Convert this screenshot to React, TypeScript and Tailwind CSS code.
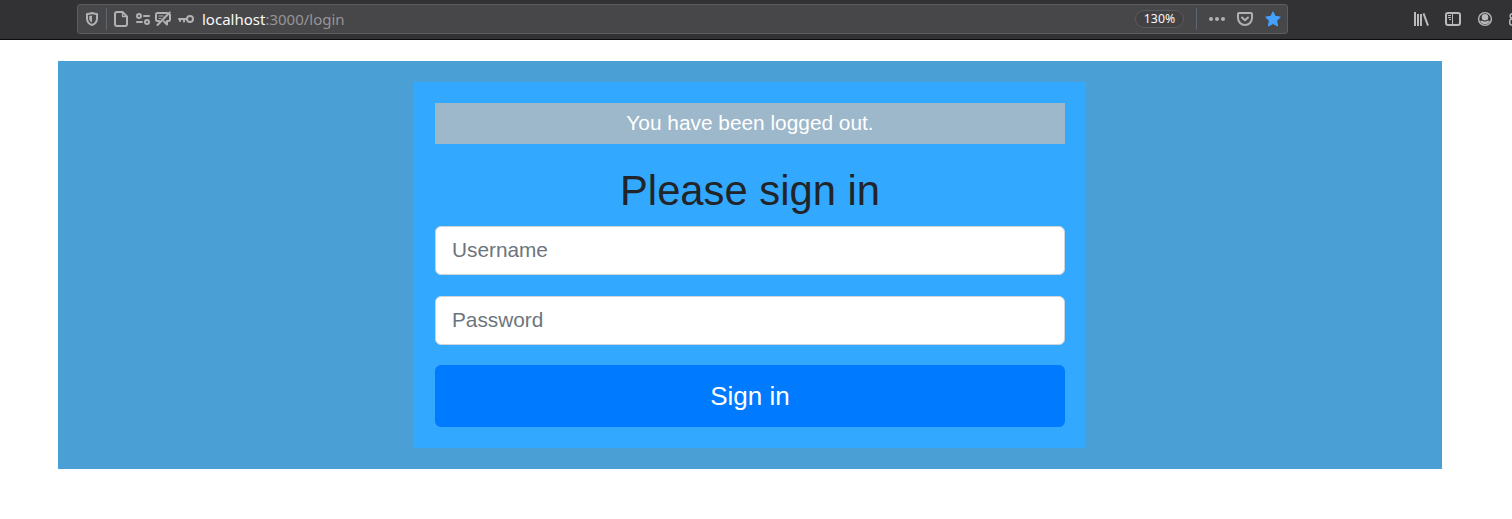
import React from "react";

const icon = "block h-4 w-4 shrink-0";

function AddressBar() {
  return (
    <div className="flex h-[30px] w-[1211px] shrink-0 items-center rounded-[3px] border border-[#5c5c61] bg-[#474749] text-[#b1b1b3]">
      <svg className={`${icon} ml-[6px]`} viewBox="0 0 16 16" fill="none">
        <path d="M8 2C9.700 2.500 11.500 2.900 13 3V7.500C13 10.800 10.900 13 8 14C5.100 13 3 10.800 3 7.500V3C4.500 2.900 6.300 2.500 8 2Z" stroke="currentColor" strokeWidth="2" strokeLinejoin="round" />
        <path d="M8 4.600V11.500C6.200 10.700 5.200 9.300 5.200 7.500V5.100Z" fill="currentColor" />
      </svg>
      <div className="ml-[6px] h-[22px] w-px bg-[#5f6670]" />
      <svg className={`${icon} ml-[6px]`} viewBox="0 0 16 16" fill="none" stroke="currentColor" strokeWidth="2" strokeLinejoin="round">
        <path d="M4 1H9.500L14 5.500V13a2 2 0 0 1-2 2H4a2 2 0 0 1-2-2V3a2 2 0 0 1 2-2Z" />
        <path d="M9.500 1.500V5.500H13.500" strokeWidth="1.300" />
      </svg>
      <svg className={`${icon} ml-[6px]`} viewBox="0 0 16 16" fill="none" stroke="currentColor" strokeWidth="2" strokeLinecap="round">
        <circle cx="4" cy="5" r="2" />
        <path d="M9 5H14M2 11H7" />
        <circle cx="12" cy="11" r="2" />
      </svg>
      <svg className={`${icon} ml-[4px]`} viewBox="0 0 16 16" fill="none" stroke="currentColor" strokeWidth="2" strokeLinecap="round" strokeLinejoin="round">
        <path d="M12 2H2.500Q1 2 1 3.500V8.500Q1 10 2.500 10H4M15 3.500V8.500Q15 10 13 10H12V13.500L9 10.500M14.700 1.500L2.500 14" />
        <path d="M4 5H8.200M4 7.500H6" strokeWidth="1.200" />
      </svg>
      <svg className={`${icon} ml-[7px]`} viewBox="0 0 16 16" fill="none" stroke="currentColor" strokeWidth="2">
        <circle cx="12" cy="8" r="3" />
        <path d="M9 8H1M2 8V10M6 8V10.500" strokeLinecap="round" />
      </svg>
      <div className="ml-[8px] whitespace-nowrap font-['Noto_Sans',sans-serif] text-[15px] leading-[20px] text-[#959597]">
        <span className="text-[#f9f9fa]">localhost</span>:3000/login
      </div>
      <div className="ml-auto flex h-[18px] w-[49px] items-center justify-center rounded-full border border-[#59595d] bg-[#424245] font-['Noto_Sans',sans-serif] text-[12.300px] leading-none text-[#f9f9fa]">130%</div>
      <div className="ml-[12px] h-[22px] w-px bg-[#5f6670]" />
      <svg className={`${icon} ml-[12px]`} viewBox="0 0 16 16" fill="currentColor">
        <circle cx="2" cy="8" r="2" /><circle cx="8" cy="8" r="2" /><circle cx="14" cy="8" r="2" />
      </svg>
      <svg className={`${icon} ml-[12px]`} viewBox="0 0 16 16" fill="none" stroke="currentColor" strokeWidth="2" strokeLinecap="round" strokeLinejoin="round">
        <path d="M2 2H14a1 1 0 0 1 1 1V7A7 7 0 0 1 1 7V3a1 1 0 0 1 1-1Z" /><path d="M5 6.500L8 9.300L11 6.500" />
      </svg>
      <svg className={`${icon} ml-[12px] mr-[6px] text-[#45a1ff]`} viewBox="0 0 16 16" fill="currentColor" stroke="currentColor" strokeLinejoin="round">
        <path d="M8 .8L10.200 5.300L15.300 6.100L11.700 9.700L12.500 15L8 12.500L3.500 15L4.300 9.700L.7 6.100L5.800 5.300Z" />
      </svg>
    </div>
  );
}

function BrowserToolbar() {
  return (
    <header className="flex h-[40px] items-start overflow-hidden border-b border-[#0c0c0d] bg-[#323234] pl-[77px] pt-[4px] text-[#b9b9bb]">
      <AddressBar />
      <div className="ml-[125px] flex h-[30px] shrink-0 items-center gap-[16px]">
        <svg className={icon} viewBox="0 0 16 16" fill="none" stroke="currentColor" strokeWidth="2">
          <path d="M2 1V15M5 3V15M8 3V15M10.500 2.300L15 14.700" />
        </svg>
        <svg className={icon} viewBox="0 0 16 16" fill="none" stroke="currentColor">
          <rect x="1" y="2" width="14" height="12" rx="2" strokeWidth="2" />
          <path d="M7.500 2V14" /><path d="M3 4.500H6M3 6.500H6M4 8.500H6" />
        </svg>
        <svg className={icon} viewBox="0 0 16 16" fill="none">
          <circle cx="8" cy="8" r="6.400" stroke="currentColor" strokeWidth="1.400" />
          <circle cx="8" cy="6.200" r="3.300" fill="currentColor" />
          <path d="M3 9.700H5.500Q8 11.500 10.500 9.700H13Q11.300 13.300 8 13.300Q4.700 13.300 3 9.700Z" fill="currentColor" />
        </svg>
        <svg className={icon} viewBox="0 0 16 16" fill="none" stroke="currentColor" strokeWidth="1.500">
          <circle cx="3.500" cy="5" r="2.300" /><rect x=".8" y="8" width="11" height="6" rx="2" />
        </svg>
      </div>
    </header>
  );
}

const field =
  "block h-[49px] w-full rounded-[6px] border border-[#ced4da] bg-white px-[16px] pb-[2px] text-[20.800px] text-[#495057] outline-none placeholder:text-[#6c757d] placeholder:opacity-100";

export default function App() {
  return (
    <div className="h-[519px] overflow-hidden bg-white font-['Liberation_Sans',Arial,sans-serif]">
      <BrowserToolbar />
      <main className="ml-[58px] mt-[21px] flex h-[408px] w-[1384px] justify-center bg-[#4aa0d5] py-[21px]">
        <form className="h-[366px] w-[672px] bg-[#33a8ff] p-[21px]" onSubmit={(event) => event.preventDefault()}>
          <div className="h-[41px] bg-[#9db7cb] text-center text-[20.850px] leading-[40px] text-white">You have been logged out.</div>
          <h1 className="mb-[10px] mt-[21px] h-[51px] text-center text-[41.750px] leading-[51px] text-[#212529]">Please sign in</h1>
          <input className={`${field} mb-[21px]`} placeholder="Username" aria-label="Username" />
          <input className={`${field} mb-[20px]`} type="password" placeholder="Password" aria-label="Password" />
          <button className="block h-[62px] w-full rounded-[6px] bg-[#007bff] text-[26px] leading-[39px] text-white">Sign in</button>
        </form>
      </main>
    </div>
  );
}
